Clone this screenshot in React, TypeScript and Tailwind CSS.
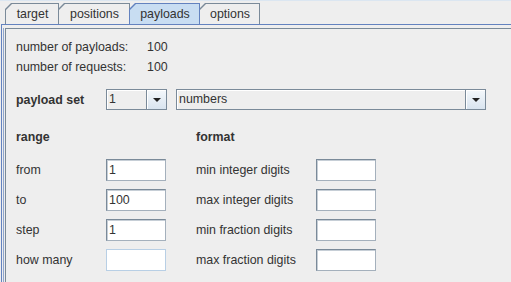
import React from 'react'

const tabs = [
  { label: 'target', w: 'w-[54px]' },
  { label: 'positions', w: 'w-[72px]' },
  { label: 'payloads', w: 'w-[71px]', active: true },
  { label: 'options', w: 'w-[61px]' },
]

function Tab({ label, w, active }: { label: string; w: string; active?: boolean }) {
  // slanted top-left corner like the Metal look and feel
  const shape = '[clip-path:polygon(0_6px,6px_0,100%_0,100%_100%,0_100%)]'
  return (
    <div className={`relative h-[21px] -mr-[1px] ${w} ${shape} ${active ? 'bg-[#6382bf] z-10' : 'bg-[#7a8a99]'}`}>
      <div
        className={`absolute left-[1px] right-[1px] top-[1px] bottom-0 ${shape} flex items-center justify-center ${
          active ? 'bg-[#c8ddf2]' : 'bg-[#eeeeee]'
        }`}
      >
        <span className="pl-[1px] pb-[1px]">{label}</span>
      </div>
    </div>
  )
}

function Combo({ value, width }: { value: string; width: string }) {
  return (
    <div className={`flex h-[21px] ${width} border border-[#7a8a99] bg-[#eeeeee]`}>
      <div className="flex-1 flex items-center pl-[2px] pb-[1px] border-r border-[#7a8a99] shadow-[inset_1px_1px_0_#ffffff]">
        {value}
      </div>
      <div className="w-[19px] flex items-center justify-center bg-gradient-to-b from-[#f4f8fb] to-[#d9e4ef] shadow-[inset_1px_1px_0_#ffffff]">
        <div className="w-0 h-0 border-l-[4px] border-r-[4px] border-t-[4px] border-l-transparent border-r-transparent border-t-[#222222]" />
      </div>
    </div>
  )
}

function Field({ value, disabled }: { value?: string; disabled?: boolean }) {
  return (
    <div
      className={`w-[60px] h-[22px] bg-white flex items-center pl-[2px] pb-[1px] border ${
        disabled ? 'border-[#b8cfe5]' : 'border-[#7a8a99] border-r-[#a4b0bc] border-b-[#a4b0bc] shadow-[inset_1px_1px_0_#c6ced6]'
      }`}
    >
      {value}
    </div>
  )
}

const rangeRows = [
  { label: 'from', value: '1' },
  { label: 'to', value: '100' },
  { label: 'step', value: '1' },
  { label: 'how many', value: '', disabled: true },
]

const formatRows = ['min integer digits', 'max integer digits', 'min fraction digits', 'max fraction digits']

export default function App() {
  return (
    <div className="w-[511px] h-[282px] overflow-hidden bg-[#eeeeee] text-[12.4px] leading-[14px] text-[#333333] font-['Liberation_Sans',Arial,sans-serif]">
      <div className="flex items-end h-[24px] pl-[5px] border-t border-[#dbe6f1]">
        {tabs.map((t) => (
          <Tab key={t.label} {...t} />
        ))}
      </div>

      <div className="ml-[1px] h-[258px] border-l border-t border-[#6382bf]">
        <div className="ml-[1px] mt-[3px] h-full border-l border-[#8fa6cf]">
          <div className="ml-[1px] h-full border-l border-t border-[#7a8a99] pl-[10px] pt-[8px]">
            <div className="flex h-[20px] items-center">
              <span className="w-[131px]">number of payloads:</span>
              <span>100</span>
            </div>
            <div className="flex h-[20px] items-center">
              <span className="w-[131px]">number of requests:</span>
              <span>100</span>
            </div>

            <div className="flex items-center mt-[12px]">
              <span className="w-[90px] font-bold">payload set</span>
              <Combo value="1" width="w-[61px]" />
              <div className="w-[9px]" />
              <Combo value="numbers" width="w-[310px]" />
            </div>

            <div className="flex mt-[17px] h-[20px] items-center font-bold">
              <span className="w-[180px]">range</span>
              <span>format</span>
            </div>

            <div className="flex flex-col gap-[8px] mt-[12px]">
              {rangeRows.map((r, i) => (
                <div key={r.label} className="flex items-center">
                  <span className="w-[90px]">{r.label}</span>
                  <Field value={r.value} disabled={r.disabled} />
                  <span className="w-[120px] ml-[30px]">{formatRows[i]}</span>
                  <Field />
                </div>
              ))}
            </div>
          </div>
        </div>
      </div>
    </div>
  )
}
